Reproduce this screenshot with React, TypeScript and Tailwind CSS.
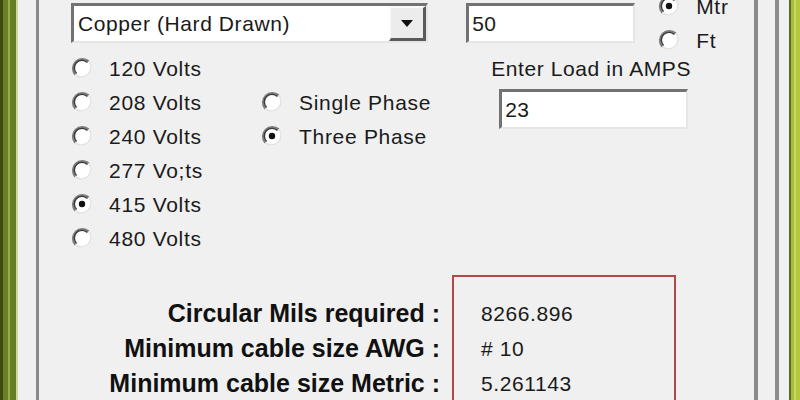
import React from "react";

const font = { fontFamily: '"Liberation Sans", Arial, sans-serif' };

const Radio = ({ checked = false }: { checked?: boolean }) => (
  <svg width="22" height="22" viewBox="0 0 22 22" className="shrink-0">
    <circle cx="11" cy="11" r="10" fill="#ffffff" />
    <path d="M4.3 17.7 A9.5 9.5 0 0 1 17.7 4.3" fill="none" stroke="#7c7c7c" strokeWidth="2.2" />
    <path d="M5.6 16.4 A7.6 7.6 0 0 1 16.4 5.6" fill="none" stroke="#3a3a3a" strokeWidth="1.4" />
    <path d="M17.7 4.3 A9.5 9.5 0 0 1 4.3 17.7" fill="none" stroke="#e2e2e2" strokeWidth="1.6" />
    {checked && <circle cx="11" cy="11" r="3.2" fill="#111111" />}
  </svg>
);

const Option = ({ label, checked }: { label: string; checked?: boolean }) => (
  <div className="flex h-[34px] shrink-0 items-center">
    <Radio checked={checked} />
    <span className="ml-[16px] text-[21px] leading-none tracking-[0.7px] text-[#1a1a1a]">{label}</span>
  </div>
);

const sunken =
  "border-t-[3px] border-l-[3px] border-b-2 border-r-2 border-t-[#727272] border-l-[#727272] border-b-[#e6e6e6] border-r-[#e6e6e6] bg-white";

export default function App() {
  const volts = ["120 Volts", "208 Volts", "240 Volts", "277 Vo;ts", "415 Volts", "480 Volts"];
  const results = [
    { label: "Circular Mils required :", value: "8266.896" },
    { label: "Minimum cable size AWG :", value: "# 10" },
    { label: "Minimum cable size Metric :", value: "5.261143" },
  ];

  return (
    <div className="flex h-[400px] w-[800px] overflow-hidden bg-[#f0f0f0]" style={font}>
      {/* left window frame */}
      <div className="flex w-[18px] shrink-0">
        <div className="w-[3px] bg-[#3e4a12]" />
        <div className="w-[5px] bg-[#6a7e28]" />
        <div className="w-[2px] bg-[#95ad42]" />
        <div className="w-[6px] bg-[#677c26]" />
        <div className="w-[2px] bg-[#c9d79a]" />
      </div>

      <div className="flex flex-1 pr-[10px]">
        <div className="flex flex-1 border-r-[4px] border-r-[#8c8c8c] pl-[18px] pr-[17px]">
          {/* group box */}
          <div className="flex-1 border-l-[3px] border-r-[4px] border-l-[#8a8a8a] border-r-[#8a8a8a] pt-[3px] text-[#1a1a1a]">
            <div className="flex items-start pl-[32px]">
              <div className="flex flex-col">
                <div className={`flex h-[40px] w-[357px] items-center ${sunken}`}>
                  <span className="ml-[4px] flex-1 text-[21px] tracking-[0.6px]">Copper (Hard Drawn)</span>
                  <div className="flex h-full w-[37px] items-center justify-center border-t-2 border-l-2 border-b-[3px] border-r-[3px] border-t-[#fafafa] border-l-[#fafafa] border-b-[#5a5a5a] border-r-[#5a5a5a] bg-[#ececec]">
                    <svg width="12" height="7" viewBox="0 0 12 7">
                      <path d="M0 0 H12 L6 7 Z" fill="#111" />
                    </svg>
                  </div>
                </div>
                <div className="mt-[8px] grid grid-cols-[190px_auto]">
                  <div className="flex flex-col">
                    {volts.map((v) => (
                      <Option key={v} label={v} checked={v === "415 Volts"} />
                    ))}
                  </div>
                  <div className="flex flex-col pt-[34px]">
                    <Option label="Single Phase" />
                    <Option label="Three Phase" checked />
                  </div>
                </div>
              </div>

              <div className="ml-[35px] flex flex-col">
                <div className="flex items-start">
                  <div className={`flex h-[40px] w-[169px] items-center ${sunken}`}>
                    <span className="ml-[3px] text-[21px] tracking-[0.5px]">50</span>
                  </div>
                  <div className="-mt-[14px] ml-[23px] flex h-[54px] flex-col">
                    <Option label="Mtr" checked />
                    <Option label="Ft" />
                  </div>
                </div>
                <div className="ml-[25px] mt-[14px] h-[24px] text-[21px] leading-[24px] tracking-[0.6px]">
                  Enter Load in AMPS
                </div>
                <div className={`ml-[33px] mt-[8px] flex h-[40px] w-[189px] items-center ${sunken}`}>
                  <span className="ml-[3px] text-[21px] tracking-[0.5px]">23</span>
                </div>
              </div>
            </div>

            <div className="mt-[20px] flex items-start gap-[12px]">
              <div className="flex w-[401px] flex-col items-end pt-[21px]">
                {results.map((r) => (
                  <div key={r.label} className="flex h-[35px] items-center whitespace-nowrap text-[25px] font-bold text-[#111]">
                    {r.label}
                  </div>
                ))}
              </div>
              <div className="h-[200px] w-[224px] border-2 border-[#b04848] pl-[27px] pt-[19px]">
                {results.map((r) => (
                  <div key={r.value} className="flex h-[35px] items-center text-[21px] tracking-[0.6px]">
                    {r.value}
                  </div>
                ))}
              </div>
            </div>
          </div>
        </div>
      </div>

      {/* right window frame */}
      <div className="flex w-[11px] shrink-0">
        <div className="w-[2px] bg-[#5b6a1e]" />
        <div className="w-[3px] bg-[#a9bd35]" />
        <div className="w-[2px] bg-[#c8d86a]" />
        <div className="flex-1 bg-[#b4c83c]" />
      </div>
    </div>
  );
}
